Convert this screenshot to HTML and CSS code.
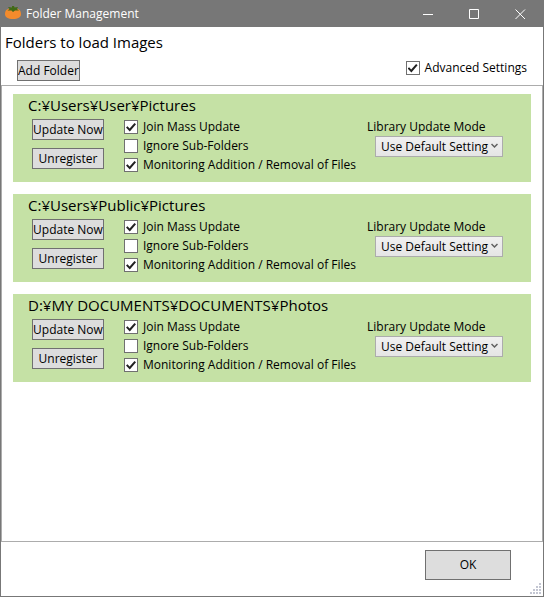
FILE: index.html
```html
<!DOCTYPE html>
<html lang="en">
<head>
<meta charset="utf-8">
<title>Folder Management</title>
<link rel="stylesheet" href="styles.css">
</head>
<body>
<div class="window">
  <header class="titlebar">
    <svg class="app-icon" width="16" height="16" viewBox="0 0 16 16" aria-hidden="true">
      <path d="M8 3C3 1.500 0 4 0 8C0 11.500 3 13 8 13S16 11.500 16 8C16 4 13 1.500 8 3Z" fill="#f48b2c"/>
      <path d="M7 0H9L9.500 1.500L13 1L12 3L14 4.500L10 4.500L8 6L6.500 4.500L2.500 4.500L4.500 3L3 1L7 1.500Z" fill="#416a16"/>
    </svg>
    <span class="caption">Folder Management</span>
    <button class="window-button" type="button" aria-label="Minimize"><svg width="11" height="11" viewBox="0 0 11 11"><path d="M0 5.500H10"/></svg></button>
    <button class="window-button" type="button" aria-label="Maximize"><svg width="11" height="11" viewBox="0 0 11 11"><path d="M.5.5H9.500V9.500H.5Z"/></svg></button>
    <button class="window-button" type="button" aria-label="Close"><svg width="11" height="11" viewBox="0 0 11 11"><path d="M.5.5L10 10M10 .5L.5 10"/></svg></button>
  </header>
  <section class="toolbar">
    <h1>Folders to load Images</h1>
    <div class="tools">
      <button class="button" type="button">Add Folder</button>
      <label class="check"><input type="checkbox" checked>Advanced Settings</label>
    </div>
  </section>
  <main class="folders">
    <article class="folder">
      <h2>C:¥Users¥User¥Pictures</h2>
      <div class="folder-body">
        <div class="actions">
          <button class="button" type="button">Update Now</button>
          <button class="button" type="button">Unregister</button>
        </div>
        <div class="options">
          <label class="check"><input type="checkbox" checked>Join Mass Update</label>
          <label class="check"><input type="checkbox">Ignore Sub-Folders</label>
          <label class="check"><input type="checkbox" checked>Monitoring Addition / Removal of Files</label>
        </div>
        <div class="mode">
          <label for="mode-1">Library Update Mode</label>
          <div class="select"><select id="mode-1"><option>Use Default Setting</option></select><svg width="7" height="6" viewBox="0 0 7 6"><path d="M.5 1L3.500 4L6.500 1"/></svg></div>
        </div>
      </div>
    </article>
    <article class="folder">
      <h2>C:¥Users¥Public¥Pictures</h2>
      <div class="folder-body">
        <div class="actions">
          <button class="button" type="button">Update Now</button>
          <button class="button" type="button">Unregister</button>
        </div>
        <div class="options">
          <label class="check"><input type="checkbox" checked>Join Mass Update</label>
          <label class="check"><input type="checkbox">Ignore Sub-Folders</label>
          <label class="check"><input type="checkbox" checked>Monitoring Addition / Removal of Files</label>
        </div>
        <div class="mode">
          <label for="mode-2">Library Update Mode</label>
          <div class="select"><select id="mode-2"><option>Use Default Setting</option></select><svg width="7" height="6" viewBox="0 0 7 6"><path d="M.5 1L3.500 4L6.500 1"/></svg></div>
        </div>
      </div>
    </article>
    <article class="folder">
      <h2>D:¥MY DOCUMENTS¥DOCUMENTS¥Photos</h2>
      <div class="folder-body">
        <div class="actions">
          <button class="button" type="button">Update Now</button>
          <button class="button" type="button">Unregister</button>
        </div>
        <div class="options">
          <label class="check"><input type="checkbox" checked>Join Mass Update</label>
          <label class="check"><input type="checkbox">Ignore Sub-Folders</label>
          <label class="check"><input type="checkbox" checked>Monitoring Addition / Removal of Files</label>
        </div>
        <div class="mode">
          <label for="mode-3">Library Update Mode</label>
          <div class="select"><select id="mode-3"><option>Use Default Setting</option></select><svg width="7" height="6" viewBox="0 0 7 6"><path d="M.5 1L3.500 4L6.500 1"/></svg></div>
        </div>
      </div>
    </article>
  </main>
  <footer class="footer">
    <button class="button ok" type="button">OK</button>
    <svg class="grip" width="12" height="12" viewBox="0 0 12 12" aria-hidden="true">
      <path d="M9 0h2v2h-2zM6 3h2v2h-2zM9 3h2v2h-2zM3 6h2v2h-2zM6 6h2v2h-2zM9 6h2v2h-2zM0 9h2v2h-2zM3 9h2v2h-2zM6 9h2v2h-2zM9 9h2v2h-2z"/>
    </svg>
  </footer>
</div>
</body>
</html>
```
FILE: styles.css
```css
* {
  box-sizing: border-box;
}

body {
  margin: 0;
  font: 12px/16px "Open Sans", "Noto Sans", sans-serif;
  color: #000;
}

h1,
h2 {
  margin: 0;
  font-size: 15px;
  font-weight: 400;
  line-height: 20px;
}

button,
select {
  font: inherit;
  color: inherit;
}

.window {
  display: flex;
  flex-direction: column;
  min-height: 100vh;
  border: 1px solid #777;
  background: #fff;
}

.titlebar {
  display: flex;
  align-items: center;
  height: 26px;
  padding-left: 4px;
  background: #777;
  color: #fff;
}

.caption {
  flex: 1;
  margin-left: 5px;
}

.window-button {
  display: grid;
  place-items: center;
  width: 46px;
  height: 26px;
  padding: 0;
  border: 0;
  background: none;
}

.window-button svg {
  fill: none;
  stroke: #fff;
}

.toolbar {
  padding: 5px 16px 4px 4px;
}

.tools {
  display: flex;
  justify-content: space-between;
  padding: 8px 0 0 12px;
}

.button {
  height: 21px;
  padding: 0;
  border: 1px solid #707070;
  background: #ddd;
  line-height: 16px;
  white-space: nowrap;
}

.check {
  display: flex;
  align-items: center;
  gap: 5px;
  height: 16px;
  white-space: nowrap;
}

.check input {
  appearance: none;
  display: grid;
  width: 14px;
  height: 14px;
  margin: 0;
  border: 1px solid #707070;
  background: #fff;
}

.check input:checked::before {
  content: "";
  margin: 1px;
  background: #212121;
  clip-path: polygon(0 55%, 15% 42%, 36% 65%, 85% 10%, 100% 22%, 38% 95%);
}

.folders {
  display: flex;
  flex: 1;
  flex-direction: column;
  gap: 12px;
  padding: 8px 11px;
  border: 1px solid #acacac;
}

.folder {
  min-height: 88px;
  padding: 1px 15px;
  background: #c5e1a5;
}

.folder-body {
  display: grid;
  grid-template-columns: 72px minmax(0, 1fr) 136px;
  column-gap: 20px;
  padding: 4px 13px 0 4px;
}

.actions {
  display: grid;
  grid-template-columns: 100%;
  gap: 8px;
  align-content: start;
}

.options {
  display: grid;
  gap: 3px;
  align-content: start;
}

.select {
  position: relative;
  margin: 1px 0 0 8px;
}

.select select {
  appearance: none;
  display: block;
  width: 100%;
  height: 21px;
  padding: 0 5px;
  border: 1px solid #acacac;
  border-radius: 0;
  background: linear-gradient(#f0f0f0, #e5e5e5);
}

.select svg {
  position: absolute;
  top: 7px;
  right: 5px;
  fill: none;
  stroke: #606060;
  stroke-width: 1.5;
  pointer-events: none;
}

.footer {
  display: flex;
  position: relative;
  justify-content: flex-end;
  height: 54px;
  padding: 8px 32px 0 0;
}

.ok {
  width: 86px;
  height: 30px;
}

.grip {
  position: absolute;
  right: 1px;
  bottom: 1px;
  fill: #c3c6d2;
}
```
